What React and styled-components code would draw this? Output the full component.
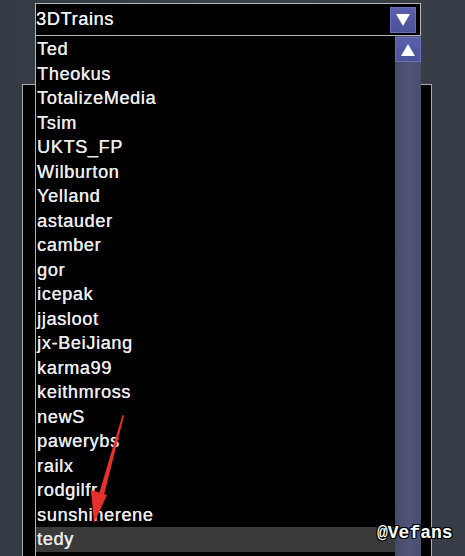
import React from "react";
import styled, { createGlobalStyle } from "styled-components";

const GlobalStyle = createGlobalStyle`
  html, body {
    margin: 0;
    padding: 0;
    background: #363d46;
    overflow: hidden;
  }
`;

const Screen = styled.div`
  position: relative;
  width: 465px;
  height: 556px;
  overflow: hidden;
  background: linear-gradient(90deg, #343b44 0%, #39404a 50%, #363d47 100%);
  font-family: "Liberation Sans", Arial, sans-serif;
  padding: 84px 0 0 22px;
  box-sizing: border-box;
`;

const BackPanel = styled.div`
  width: 410px;
  height: 500px;
  box-sizing: border-box;
  border: 1px solid #a8aab0;
  border-bottom: none;
  background: #000;
`;

const Dropdown = styled.div`
  position: absolute;
  left: 35px;
  top: 3px;
  width: 386px;
  display: flex;
  flex-direction: column;
`;

const Combo = styled.div`
  height: 33px;
  box-sizing: border-box;
  border: 1px solid #b4b6ba;
  background: #000;
  display: flex;
  align-items: center;
  justify-content: space-between;
  padding: 0 4px 0 0;
  color: #f0f0f0;
  font-size: 18px;
`;

const ComboText = styled.span`
  letter-spacing: 0.7px;
  text-shadow: 0.3px 0 0 #f0f0f0;
`;

const ArrowButton = styled.div`
  width: ${(p) => p.$w}px;
  height: ${(p) => p.$h}px;
  background: linear-gradient(180deg, #5a60aa 0%, #4c5298 100%);
  box-shadow: inset 0 0 0 1px #6a70b8;
  display: flex;
  align-items: center;
  justify-content: center;
`;

const List = styled.div`
  height: 530px;
  display: flex;
  border-left: 1px solid #b0b2b6;
  background: #000;
`;

const Items = styled.div`
  flex: 1;
  padding-top: 1px;
  display: flex;
  flex-direction: column;
`;

const Item = styled.div`
  height: 24.5px;
  line-height: 24.5px;
  font-size: 18px;
  color: #ececec;
  padding-left: 1px;
  letter-spacing: 0.7px;
  text-shadow: 0.3px 0 0 #ececec;
  background: ${(p) => (p.$active ? "#3a3a3a" : "transparent")};
`;

const ScrollBar = styled.div`
  width: 26px;
  background: linear-gradient(90deg, #454a66 0%, #50557a 50%, #4a4f6e 100%);
  display: flex;
  flex-direction: column;
  padding-top: 1px;
`;

const Watermark = styled.div`
  position: absolute;
  left: 377px;
  top: 523px;
  font-family: "Liberation Mono", "DejaVu Sans Mono", monospace;
  font-size: 18px;
  font-weight: bold;
  color: #fff;
  text-shadow: 1px 0 0 #000, -1px 0 0 #000, 0 1px 0 #000, 0 -1px 0 #000,
    1px 1px 0 #000, -1px -1px 0 #000, 1px -1px 0 #000, -1px 1px 0 #000;
`;

const Annotation = styled.svg`
  position: absolute;
  left: 0;
  top: 0;
  pointer-events: none;
`;

const names = [
  "Ted",
  "Theokus",
  "TotalizeMedia",
  "Tsim",
  "UKTS_FP",
  "Wilburton",
  "Yelland",
  "astauder",
  "camber",
  "gor",
  "icepak",
  "jjasloot",
  "jx-BeiJiang",
  "karma99",
  "keithmross",
  "newS",
  "pawerybs",
  "railx",
  "rodgilfr",
  "sunshinerene",
  "tedy",
];

const Triangle = ({ up }) => (
  <svg width="16" height="14" viewBox="0 0 16 14">
    <polygon points={up ? "8,1 15,13 1,13" : "1,1 15,1 8,13"} fill="#fff" />
  </svg>
);

const App = () => {
  return (
    <>
      <GlobalStyle />
      <Screen>
        <BackPanel />
        <Dropdown>
          <Combo>
            <ComboText>3DTrains</ComboText>
            <ArrowButton $w={26} $h={26}>
              <Triangle />
            </ArrowButton>
          </Combo>
          <List>
            <Items>
              {names.map((n) => (
                <Item key={n} $active={n === "tedy"}>
                  {n}
                </Item>
              ))}
            </Items>
            <ScrollBar>
              <ArrowButton $w={26} $h={25}>
                <Triangle up />
              </ArrowButton>
            </ScrollBar>
          </List>
        </Dropdown>
        <Annotation width="465" height="556">
          <polygon points="122.5,415 124,415.5 104,495 99,494" fill="#e8302c" />
          <polygon points="94,523 91,490 107,495" fill="#e8302c" />
        </Annotation>
        <Watermark>@Vefans</Watermark>
      </Screen>
    </>
  );
};

export default App;
